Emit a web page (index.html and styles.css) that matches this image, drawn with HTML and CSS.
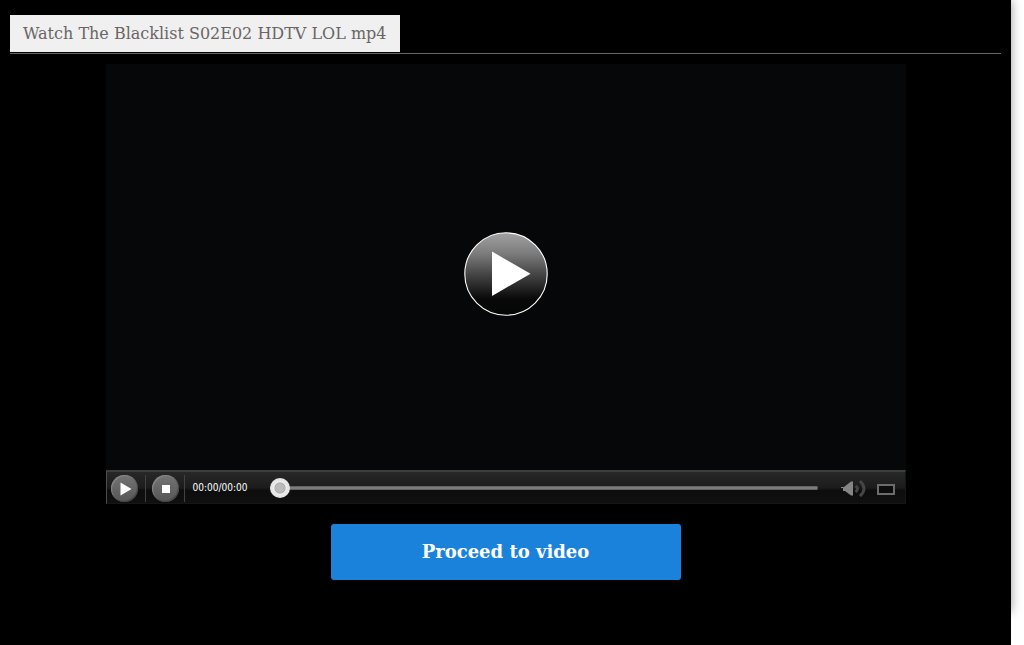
FILE: index.html
```html
<!DOCTYPE html>
<html lang="en">
<head>
    <meta charset="UTF-8">
    <meta name="viewport" content="width=device-width, initial-scale=1.0">
    <link rel="stylesheet" href="styles.css">
    <title>Watch The Blacklist S02E02 HDTV LOL mp4</title>
</head>
<body>
    <div class="page">
        <div class="content">
            <div class="header">
                <h1 class="title">Watch The Blacklist S02E02 HDTV LOL mp4</h1>
            </div>
            <div class="player">
                <div class="screen">
                    <button class="big-play" type="button" aria-label="Play video">
                        <svg width="84" height="84" viewBox="0 0 84 84">
                            <defs>
                                <linearGradient id="glass" x1="0" y1="0" x2="0" y2="1">
                                    <stop offset="0" stop-color="#a2a2a2"/>
                                    <stop offset="0.25" stop-color="#7c7c7c"/>
                                    <stop offset="0.5" stop-color="#464646"/>
                                    <stop offset="0.8" stop-color="#090909"/>
                                    <stop offset="1" stop-color="#040506"/>
                                </linearGradient>
                            </defs>
                            <circle cx="42" cy="42" r="41.2" fill="url(#glass)" stroke="#fff" stroke-width="1.1"/>
                            <path d="M28 19.5V64L66.5 41.7z" fill="#fff"/>
                        </svg>
                    </button>
                </div>
                <div class="controls">
                    <button class="round" type="button" aria-label="Play">
                        <svg width="27" height="27" viewBox="0 0 27 27"><path d="M9.5 7.5v13l11-6.5z" fill="#fff"/></svg>
                    </button>
                    <span class="divider"></span>
                    <button class="round" type="button" aria-label="Stop">
                        <svg width="27" height="27" viewBox="0 0 27 27"><path d="M10 10h8v8h-8z" fill="#fff"/></svg>
                    </button>
                    <span class="divider last"></span>
                    <span class="time">00:00/00:00</span>
                    <input class="seek" type="range" min="0" max="100" value="0" aria-label="Seek">
                    <button class="icon" type="button" aria-label="Volume">
                        <svg width="26" height="18" viewBox="0 0 26 18">
                            <path d="M0 8h3L10 2.5h2v14h-2L4 12H2V9H0z" fill="#858585"/>
                            <path d="M14.500 7q4 2.500 0 6" fill="none" stroke="#444" stroke-width="3"/>
                            <path d="M19 2Q27 9.500 19 17" fill="none" stroke="#464646" stroke-width="3"/>
                        </svg>
                    </button>
                    <button class="icon" type="button" aria-label="Full screen">
                        <svg width="18" height="14" viewBox="0 0 18 14"><path d="M1 4h16v9H1z" fill="#0c0c0c" stroke="#6c6c6c" stroke-width="2"/></svg>
                    </button>
                </div>
            </div>
            <a class="proceed" href="#">Proceed to video</a>
        </div>
        <div class="bottom"></div>
    </div>
</body>
</html>
```
FILE: styles.css
```css
*{
    box-sizing: border-box;
}
body{
    background: #fff;
    margin: 0;
    font-family: "DejaVu Serif", serif;
}
button{
    display: flex;
    border: 0;
    padding: 0;
    background: none;
    cursor: pointer;
}
.page{
    display: flex;
    flex-direction: column;
    min-height: 100vh;
    margin-right: 13px;
}
.content{
    padding: 15px 10px 32px;
    background: #000;
    box-shadow: 0 0 10px #999;
}
/* Black area under the content, covers its shadow */
.bottom{
    flex: 1;
    background: #000;
}
.header{
    display: flex;
    padding-bottom: 1px;
    border-bottom: 1px solid #666;
}
.title{
    margin: 0;
    padding: 9px 13px;
    background: #f0f0f0;
    color: #6a6565;
    font-size: 16px;
    font-weight: normal;
    line-height: 19px;
}

/* Video player */
.player{
    max-width: 800px;
    margin: 10px auto 20px;
    background: #060709;
}
.screen{
    display: flex;
    justify-content: center;
    align-items: center;
    height: 406px;
    padding-top: 14px;
}
.controls{
    display: flex;
    align-items: center;
    height: 34px;
    padding: 1px 10px 0 4px;
    border: 1px solid #161616;
    border-top: 2px solid #3c3e3d;
    border-left-color: #4b4d4c;
    background: linear-gradient(#282828, #1c1c1c 50%, #0d0d0d 60%, #101010);
}
.round{
    border-radius: 50%;
    background: linear-gradient(#747474, #565656);
    box-shadow: inset 1px 1px 1px #888, inset -1px -1px 1px #444;
}
.divider{
    width: 1px;
    height: 27px;
    margin: 0 6px 0 7px;
    background: #424242;
}
.divider.last{
    margin: 0 8px 0 5px;
}
.time{
    color: #fff;
    font-family: "DejaVu Sans Condensed", "Liberation Sans", sans-serif;
    font-size: 10px;
    line-height: 12px;
}
.seek{
    flex: 1;
    min-width: 0;
    height: 20px;
    margin: 0 23px;
    appearance: none;
    background: linear-gradient(#555, #8a8a8a, #555) center / 100% 4px no-repeat;
}
.seek::-webkit-slider-thumb{
    appearance: none;
    width: 20px;
    height: 20px;
    border: 0;
    border-radius: 50%;
    background: radial-gradient(circle, #bbb 4px, #aaa 5px, #ececec 6px, #e4e4e4 9px);
}
.icon + .icon{
    margin-left: 10px;
}

.proceed{
    display: block;
    max-width: 350px;
    margin: 0 auto;
    padding: 16px;
    border-radius: 3px;
    background: #1b82dc;
    color: #fff;
    font-size: 18px;
    font-weight: bold;
    line-height: 24px;
    text-align: center;
    text-decoration: none;
}
```
